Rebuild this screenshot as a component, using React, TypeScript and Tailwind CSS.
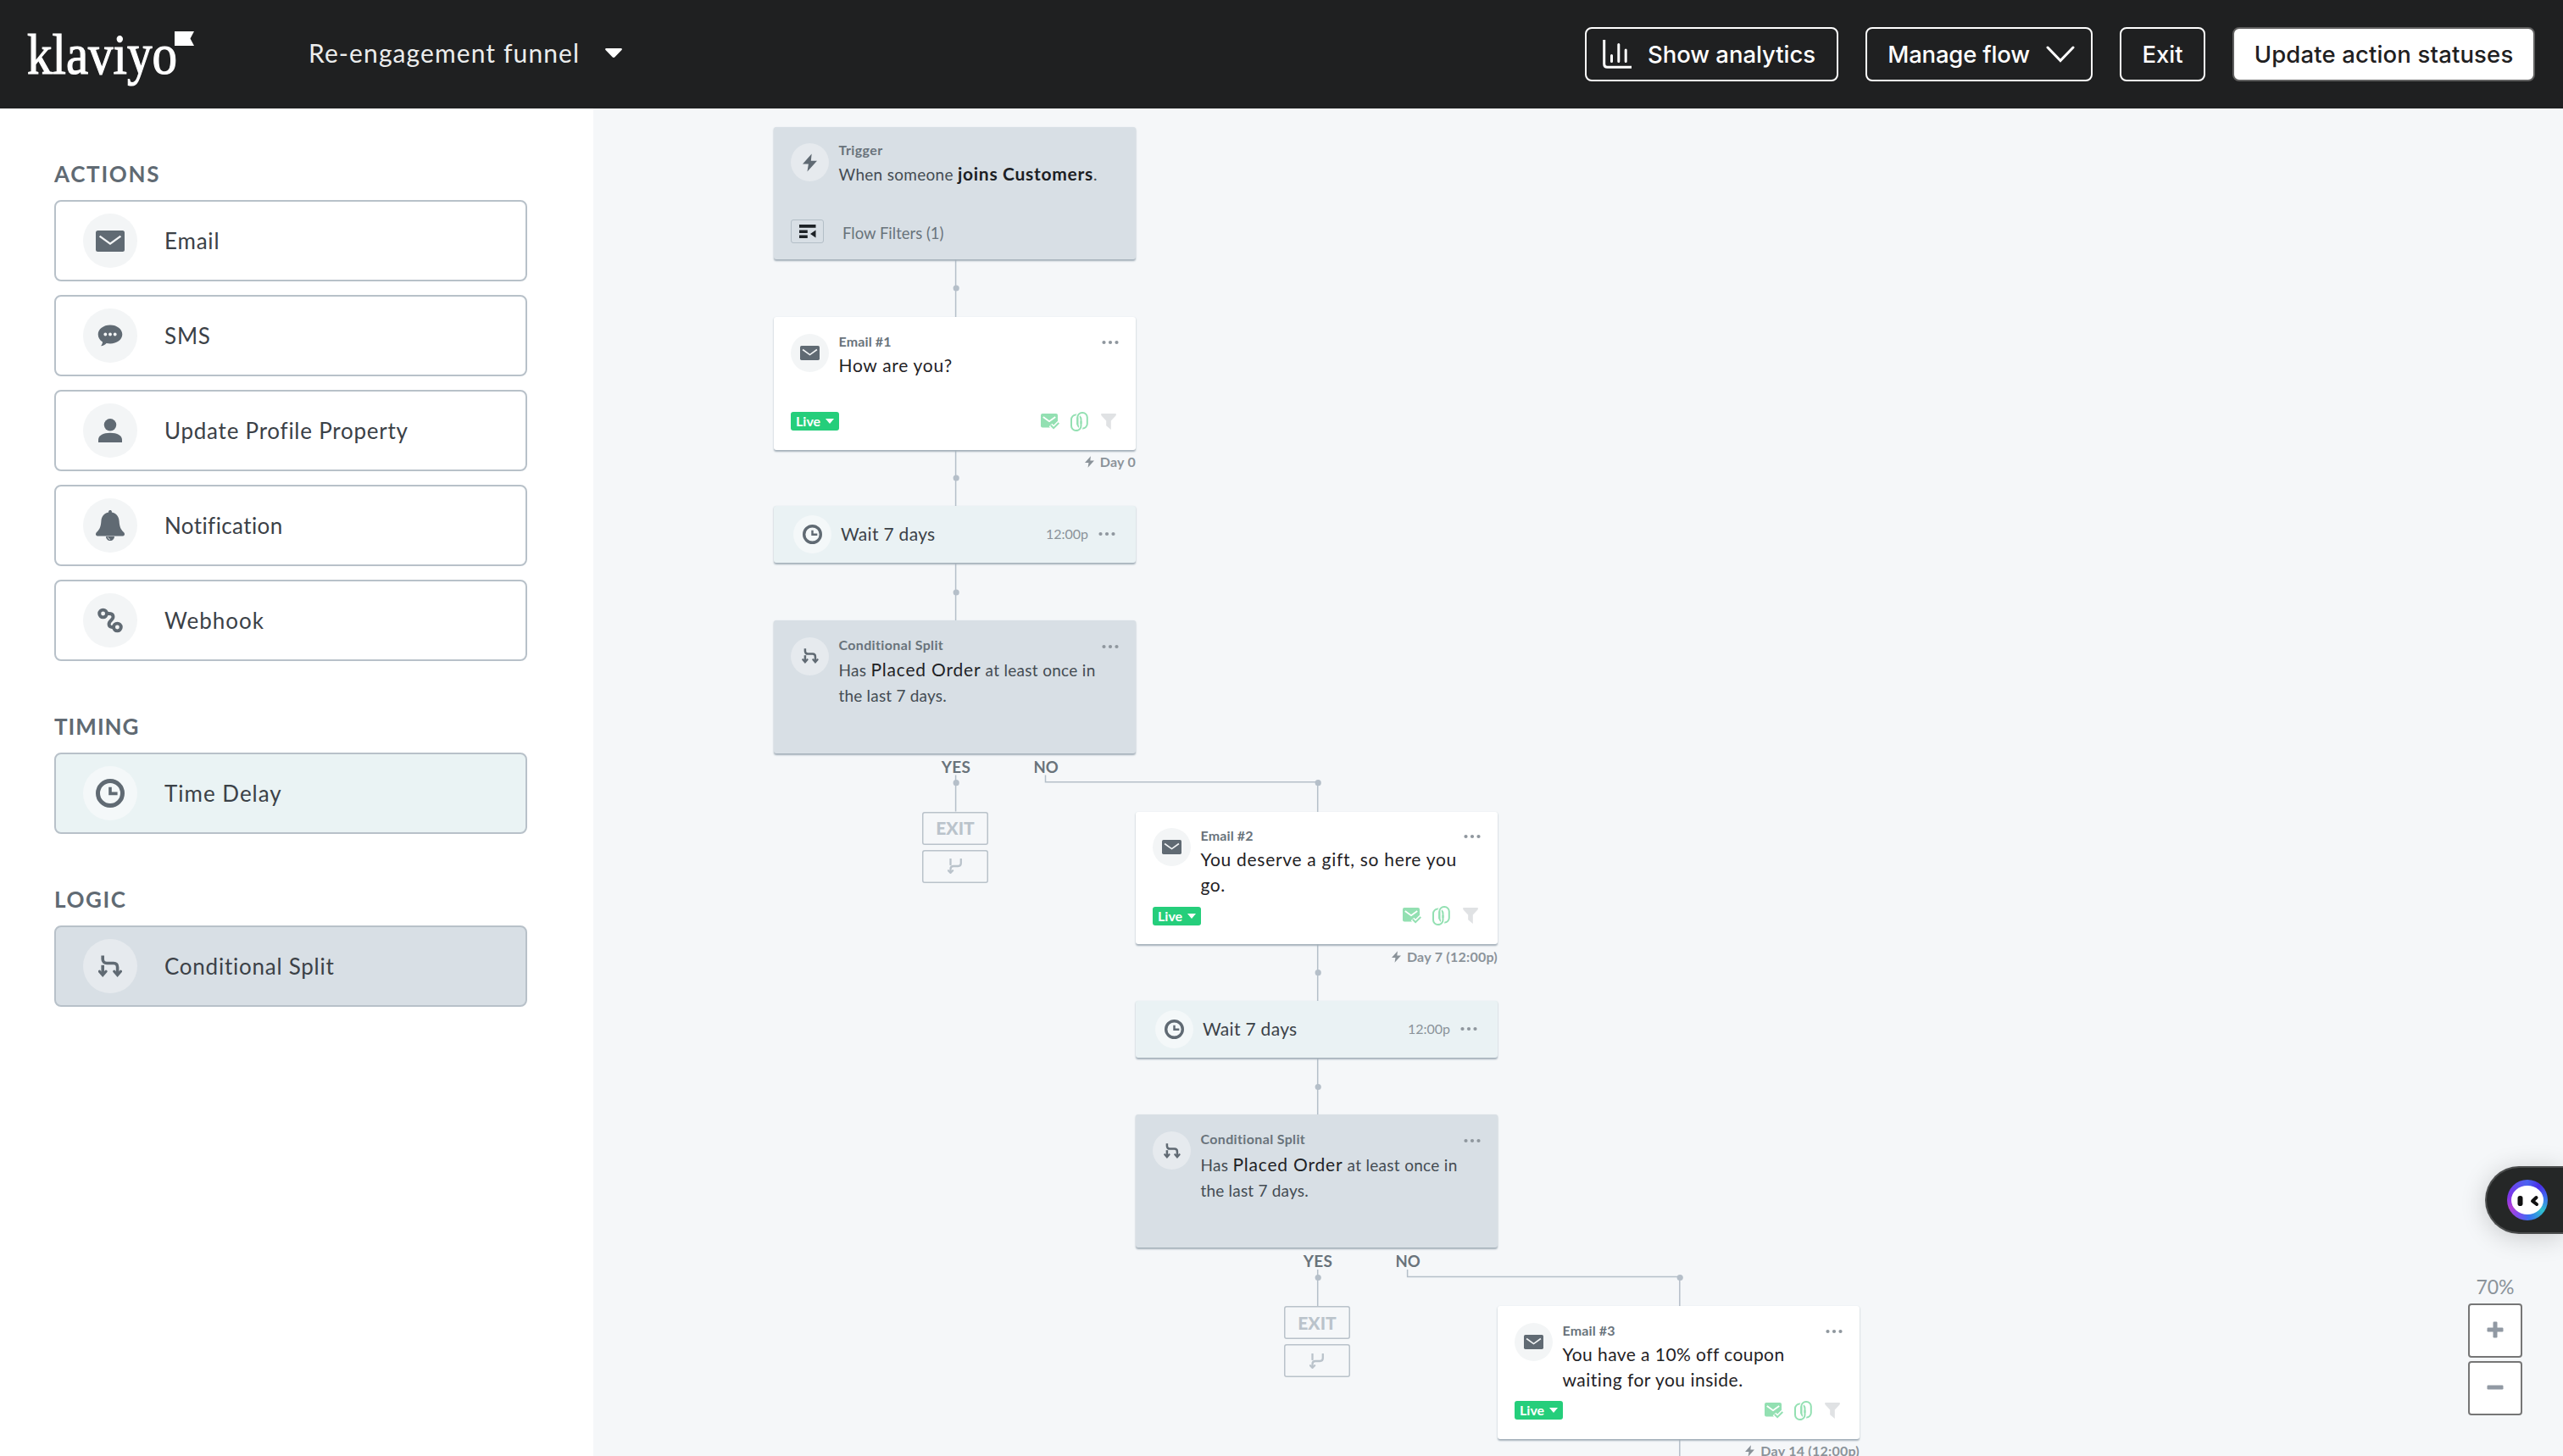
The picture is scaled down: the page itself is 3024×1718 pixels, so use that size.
import type { ReactNode } from "react";

type IconProps = { className?: string };

function MailIcon({ className }: IconProps) {
  return (
    <svg viewBox="0 0 34 25" className={className}>
      <rect width="34" height="25" rx="2.5" fill="currentColor" />
      <path d="M4.6 6.6 17 15.6 29.4 6.6" fill="none" stroke="#f3f5f6" strokeWidth="2.4" />
    </svg>
  );
}

function ChatIcon({ className }: IconProps) {
  return (
    <svg viewBox="0 0 30 26" className={className}>
      <path
        d="M15 .5C23 .5 29.3 5.4 29.3 11.600S23 22.500 15 22.500c-1.600 0-3-.2-4.400-.5C9 23.800 6.600 25 4 25.300c1.200-1.300 2-3 2-4.800C2.600 18.500.7 15.300.7 11.600.7 5.400 7 .5 15 .5Z"
        fill="currentColor"
      />
      <circle cx="9.300" cy="11.500" r="1.900" fill="#f3f5f6" />
      <circle cx="15" cy="11.500" r="1.900" fill="#f3f5f6" />
      <circle cx="20.700" cy="11.500" r="1.900" fill="#f3f5f6" />
    </svg>
  );
}

function PersonIcon({ className }: IconProps) {
  return (
    <svg viewBox="0 0 28 28" className={className} fill="currentColor">
      <circle cx="14" cy="7.300" r="7.200" />
      <path d="M0 28v-3c0-5 5.500-8.200 14-8.200S28 20 28 25v3Z" />
    </svg>
  );
}

function BellIcon({ className }: IconProps) {
  return (
    <svg viewBox="0 0 34 36" className={className} fill="currentColor">
      <path d="M17 0c1.100 0 1.900.7 1.900 1.700v.8c5.200 1 8.400 4.800 8.700 10.300.4 6.500 1.600 9.700 5.400 13.200 1.700 1.600 1.200 4.500-1 4.500H2c-2.200 0-2.700-2.900-1-4.500 3.800-3.500 5-6.700 5.400-13.200.3-5.500 3.500-9.300 8.700-10.300v-.8C15.100.7 15.900 0 17 0Z" />
      <path d="M12 31h10c0 2.900-2.200 5-5 5s-5-2.100-5-5Z" />
      <path d="M14.300 31.800c.3 1.500 1.200 2.400 2.600 2.600" fill="none" stroke="#f3f5f6" strokeWidth="0.900" />
    </svg>
  );
}

function WebhookIcon({ className }: IconProps) {
  return (
    <svg viewBox="0 0 30 30" className={className} fill="none" stroke="currentColor" strokeWidth="3.900">
      <circle cx="6.600" cy="7" r="4.400" />
      <circle cx="23.400" cy="23" r="4.400" />
      <path d="M10.800 7h2.700c6 0 6 4.600 3 7.500-4.500 4-4 8.700 2.400 8.700" />
    </svg>
  );
}

function ClockIcon({ className }: IconProps) {
  return (
    <svg viewBox="0 0 34 34" className={className} fill="none" stroke="currentColor">
      <circle cx="17" cy="17" r="14.500" strokeWidth="5" />
      <path d="M17 9.800v7.600h8.600" strokeWidth="3.600" />
    </svg>
  );
}

function SplitIcon({ className }: IconProps) {
  return (
    <svg viewBox="0 0 28 26" className={className} fill="none" stroke="currentColor">
      <path d="M5.200.5v4.300c0 3 2 4.700 4.800 4.700h8c3.200 0 4.600 1.800 4.600 4.800V21" strokeWidth="3.600" />
      <path d="M5.200 11.800V21" strokeWidth="3.600" />
      <path d="m1.400 19.200 3.800 4.300L9 19.200M18.800 19.200l3.800 4.300 3.800-4.300" strokeWidth="3.200" strokeLinecap="round" />
    </svg>
  );
}

function MergeIcon({ className }: IconProps) {
  return (
    <svg viewBox="0 0 18 18" className={className} fill="none" stroke="currentColor" strokeWidth="2.300">
      <path d="M3.500.8v6.400" strokeLinecap="round" />
      <path d="M15.800.8v4.800c0 2.200-1.200 3.400-3.400 3.400H7c-2.200 0-3.500 1.200-3.500 3.400v4" strokeLinecap="round" />
      <path d="m.9 14.200 2.600 2.600 2.600-2.600" strokeLinecap="round" />
    </svg>
  );
}

function BoltIcon({ className }: IconProps) {
  return (
    <svg viewBox="0 0 18 22" className={className} fill="currentColor">
      <path d="M11.300 0 0 12.700h7.300L5.800 22 18 8.700h-7.600Z" />
    </svg>
  );
}

function FilterListIcon() {
  return (
    <svg viewBox="0 0 20 16" className="h-4 w-5" fill="#1d2226">
      <path d="M0 0h19.500v3.700H0ZM0 6.400h9.800V10H0ZM0 12.400h9.800V16H0ZM19.500 6.400v9L13 10.900Z" />
    </svg>
  );
}

function SmartSendIcon() {
  return (
    <svg viewBox="0 0 22 19" className="h-[19px] w-[22px]">
      <rect width="20" height="16.500" rx="2" fill="#93e0b2" />
      <path d="m2.800 4 7.200 5.200L17.200 4" fill="none" stroke="#fff" strokeWidth="1.800" />
      <path d="m11.500 13.600 3.500 3.600 6.500-6.500" fill="none" stroke="#fff" strokeWidth="5" />
      <path d="m11.800 13.800 3.300 3.400 6.200-6.200" fill="none" stroke="#93e0b2" strokeWidth="2" />
    </svg>
  );
}

function LinkIcon() {
  return (
    <svg viewBox="0 0 21 23" className="h-[23px] w-[21px]" fill="none" stroke="#93e0b2" strokeWidth="2">
      <rect x="1" y="3.500" width="11.500" height="18.500" rx="5.500" />
      <path d="M8.300 8V7a5.700 5.700 0 0 1 5.700-6" stroke="#fff" strokeWidth="4.400" />
      <rect x="8.300" y="1" width="11.500" height="18.500" rx="5.500" />
      <path d="M12.500 14v2.500a5.500 5.500 0 0 1-4 5.300" stroke="#fff" strokeWidth="4.400" />
      <path d="M12.500 11v5.500A5.500 5.500 0 0 1 7 22" />
      <path d="M8.300 6.500V15" />
    </svg>
  );
}

function FunnelIcon() {
  return (
    <svg viewBox="0 0 18 19" className="h-[19px] w-[18px]" fill="#e0e2e4">
      <path d="M.5 0h17c.6.900.5 2-.3 2.800L11.800 8.600V19L6.200 14.200V8.600L.8 2.800C0 2 0 .9.500 0Z" />
    </svg>
  );
}

function Dots({ className }: IconProps) {
  return (
    <svg viewBox="0 0 20 6" className={`h-[6px] w-5 ${className ?? ""}`} fill="#8f979e">
      <circle cx="2.500" cy="3" r="2.100" />
      <circle cx="10" cy="3" r="2.100" />
      <circle cx="17.500" cy="3" r="2.100" />
    </svg>
  );
}

function Logo() {
  return (
    <div className="flex w-[200px] items-start">
      <span className="w-[176px] origin-left scale-x-[0.868] font-['Liberation_Serif'] text-[68px] leading-[74px] whitespace-nowrap text-white [-webkit-text-stroke:1.2px_white]">
        klaviyo
      </span>
      <svg viewBox="0 0 23 17" className="mt-[10px] -ml-[2px] h-[17px] w-[23px] shrink-0" fill="#fff">
        <path d="M0 0h23l-4.500 8.500L23 17H0Z" />
      </svg>
    </div>
  );
}

function Header() {
  return (
    <header className="flex h-32 shrink-0 items-center bg-[#1f2021] pr-[33px] pl-[32px] text-white">
      <Logo />
      <div className="-mt-[3px] ml-[132px] flex items-center text-[30px] tracking-[1.100px] text-[#eceded]">
        <span className="w-[322px] whitespace-nowrap">Re-engagement funnel</span>
        <svg viewBox="0 0 20 11" className="ml-[28px] h-[11px] w-5" fill="#fff">
          <path d="M1.500 0h17c1.300 0 1.800 1.100 1 2l-8 8.300c-.8.900-2.200.900-3 0L.5 2C-.3 1.100.2 0 1.500 0Z" />
        </svg>
      </div>
      <div className="ml-auto flex gap-8 font-[Inter] text-[27.500px] font-medium whitespace-nowrap">
        <button className="flex h-16 w-[299px] items-center rounded-lg border-2 border-white pl-[19px]">
          <svg viewBox="0 0 34 34" className="h-[34px] w-[34px]" fill="none" stroke="#fff" strokeWidth="3">
            <path d="M1.700 0v28.500c0 2.500 1 3.800 3.600 3.800H34" />
            <path d="M10.500 18.500v7M18.800 5.500v20M27.200 12v13.500" strokeLinecap="round" />
          </svg>
          <span className="mt-px ml-[19px] tracking-[-0.050px]">Show analytics</span>
        </button>
        <button className="flex h-16 w-[268px] items-center rounded-lg border-2 border-white pl-[24px]">
          <span className="mt-px w-[168px] tracking-[-0.200px]">Manage flow</span>
          <svg viewBox="0 0 34 20" className="ml-[19px] h-5 w-[34px]" fill="none" stroke="#fff" strokeWidth="3" strokeLinecap="round">
            <path d="M2 2l15 15.500L32 2" />
          </svg>
        </button>
        <button className="h-16 w-[101px] rounded-lg border-2 border-white pt-px">Exit</button>
        <button className="h-16 w-[357px] rounded-lg border-2 border-[#606060] bg-white pt-px text-[#1f2021]">
          <span className="tracking-[0.150px]">Update action statuses</span>
        </button>
      </div>
    </header>
  );
}

function PaletteItem({
  icon,
  label,
  box,
  disc,
  tracking = "tracking-[0.800px]",
}: {
  icon: ReactNode;
  label: string;
  box: string;
  disc: string;
  tracking?: string;
}) {
  return (
    <div className={`flex h-24 w-[558px] items-center rounded-lg border-2 border-[#b8c1c9] pl-8 ${box}`}>
      <span className={`flex size-16 items-center justify-center rounded-full text-[#606a73] ${disc}`}>{icon}</span>
      <span className={`ml-8 text-[26px] whitespace-nowrap text-[#3b4147] ${tracking}`}>{label}</span>
    </div>
  );
}

function PaletteSection({ title, tracking, children }: { title: string; tracking: string; children: ReactNode }) {
  return (
    <section className="pt-[57px]">
      <h2 className={`mb-[11px] text-[26px] leading-10 font-bold text-[#606a73] ${tracking}`}>{title}</h2>
      <div className="flex flex-col gap-4">{children}</div>
    </section>
  );
}

function Sidebar() {
  return (
    <aside className="w-[700px] shrink-0 bg-white pl-16">
      <PaletteSection title="ACTIONS" tracking="tracking-[1.700px]">
        <PaletteItem label="Email" box="bg-white" disc="bg-[#f3f5f6]" icon={<MailIcon className="h-[25px] w-[34px]" />} />
        <PaletteItem label="SMS" box="bg-white" disc="bg-[#f3f5f6]" icon={<ChatIcon className="h-[26px] w-[30px]" />} />
        <PaletteItem label="Update Profile Property" tracking="tracking-[0.750px]" box="bg-white" disc="bg-[#f3f5f6]" icon={<PersonIcon className="size-7" />} />
        <PaletteItem label="Notification" tracking="tracking-[0.400px]" box="bg-white" disc="bg-[#f3f5f6]" icon={<BellIcon className="h-9 w-[34px]" />} />
        <PaletteItem label="Webhook" tracking="tracking-[1.000px]" box="bg-white" disc="bg-[#f3f5f6]" icon={<WebhookIcon className="size-[30px]" />} />
      </PaletteSection>
      <PaletteSection title="TIMING" tracking="tracking-[1.000px]">
        <PaletteItem label="Time Delay" tracking="tracking-[1.000px]" box="bg-[#eaf3f4]" disc="bg-[#f4f8f9]" icon={<ClockIcon className="size-[34px]" />} />
      </PaletteSection>
      <PaletteSection title="LOGIC" tracking="tracking-[1.600px]">
        <PaletteItem label="Conditional Split" tracking="tracking-[0.750px]" box="bg-[#d8dfe5]" disc="bg-[#e6eaee]" icon={<SplitIcon className="h-[26px] w-7" />} />
      </PaletteSection>
    </aside>
  );
}

const cardShadow = "shadow-[0_1.5px_2px_#a3afb9]";

function TriggerCard() {
  return (
    <div className={`absolute top-[22px] left-[213px] h-[156px] w-[427px] rounded-[3px] bg-[#d8dfe5] pt-[19px] pl-5 ${cardShadow}`}>
      <div className="flex">
        <span className="flex size-[45px] items-center justify-center rounded-full bg-[#e6eaee] text-[#606a73]">
          <BoltIcon className="h-[22px] w-[17px]" />
        </span>
        <div className="ml-[11.500px] whitespace-nowrap">
          <div className="-mt-[2px] text-[16px] leading-5 font-bold tracking-[0.400px] text-[#69737b]">Trigger</div>
          <div className="mt-[3px] text-[19px] leading-[30px] tracking-[0.300px] text-[#444c53]">
            When someone <b className="text-[21px] tracking-[0.700px] text-[#1c2024]">joins Customers</b>.
          </div>
        </div>
      </div>
      <div className="mt-[37px] flex items-center">
        <span className="flex h-7 w-[39px] items-center justify-center rounded-[3px] border border-[#b3bec7]">
          <FilterListIcon />
        </span>
        <span className="mt-[5px] ml-[22px] text-[18.500px] leading-6 text-[#69737b]">Flow Filters (1)</span>
      </div>
    </div>
  );
}

function EmailCard({ n, lines }: { n: number; lines: { text: string; tracking: string }[] }) {
  return (
    <div className={`flex h-[156.500px] flex-col rounded-[3px] bg-white pt-[19.500px] pl-5 ${cardShadow}`}>
      <div className="flex h-[92px]">
        <span className="flex size-[45px] items-center justify-center rounded-full bg-[#f3f5f6] text-[#606a73]">
          <MailIcon className="h-[17px] w-[23px]" />
        </span>
        <div className="ml-[11.500px] w-[310px] whitespace-nowrap">
          <div className="-mt-px text-[16px] leading-5 font-bold tracking-[0.150px] text-[#69737b]">Email #{n}</div>
          <div className="mt-[3px] text-[21px] leading-[30px] text-[#1f2225]">
            {lines.map((line) => (
              <div key={line.text} className={line.tracking}>
                {line.text}
              </div>
            ))}
          </div>
        </div>
        <Dots className="mt-[7px]" />
      </div>
      <div className="flex h-[23px] items-center">
        <span className="flex h-[22px] w-[57px] items-center rounded-[3px] bg-[#25ce7b] pl-[6px] text-[16px] leading-none font-bold text-white">
          Live
          <svg viewBox="0 0 10 6" className="ml-[6px] h-[6px] w-[10px]" fill="#fff">
            <path d="M0 0h10L5 6Z" />
          </svg>
        </span>
        <div className="ml-auto flex items-center pr-[23px]">
          <SmartSendIcon />
          <span className="mr-[15px] ml-[13px]">
            <LinkIcon />
          </span>
          <FunnelIcon />
        </div>
      </div>
    </div>
  );
}

function DayLabel({ label }: { label: string }) {
  return (
    <div className="flex h-[66.500px] items-start justify-end text-[16px] font-bold tracking-[0.250px] whitespace-nowrap text-[#8b939a]">
      <span className="mt-[2.500px] flex h-6 items-center gap-[7px]">
        <BoltIcon className="h-[14px] w-[11px]" />
        {label}
      </span>
    </div>
  );
}

function WaitCard() {
  return (
    <div className={`flex h-[67px] items-center rounded-[3px] bg-[#eaf2f4] pr-6 pl-[23px] ${cardShadow}`}>
      <span className="flex size-[45px] items-center justify-center rounded-full bg-[#f4f8f9] text-[#606a73]">
        <ClockIcon className="size-[23px]" />
      </span>
      <span className="-mt-px ml-[11px] text-[21px] tracking-[0.300px] text-[#3b4147]">Wait 7 days</span>
      <span className="-mt-px ml-auto text-[16px] text-[#8b939a]">12:00p</span>
      <Dots className="-mt-px ml-[12px]" />
    </div>
  );
}

function SplitCard() {
  return (
    <div className={`flex h-[157px] rounded-[3px] bg-[#d8dfe5] pt-5 pl-5 ${cardShadow}`}>
      <span className="flex size-[45px] items-center justify-center rounded-full bg-[#e6eaee] text-[#606a73]">
        <SplitIcon className="h-[18px] w-5" />
      </span>
      <div className="ml-[11.500px] w-[310px] whitespace-nowrap">
        <div className="-mt-px text-[16px] leading-5 font-bold tracking-[0.350px] text-[#69737b]">Conditional Split</div>
        <div className="mt-[4.500px] text-[19px] leading-[30px] tracking-[0.300px] text-[#444c53]">
          <div>
            Has <span className="text-[21px] tracking-[0.800px] text-[#1f2225]">Placed Order</span> at least once in
          </div>
          <div className="tracking-[0.200px]">the last 7 days.</div>
        </div>
      </div>
      <Dots className="mt-[8px]" />
    </div>
  );
}

function Branches() {
  return (
    <div className="text-[#69737b]">
      <div className="flex pt-[4px] text-[19px] leading-6 font-bold">
        <span className="ml-[185px] w-[60px] text-center tracking-[0.300px]">YES</span>
        <span className="ml-[46px] w-[60px] text-center text-[18.500px]">NO</span>
      </div>
      <div className="mt-[41px] ml-[175px] flex w-[78px] flex-col gap-[6px] text-[#bac3cb]">
        <span className="flex h-[39px] items-center justify-center rounded-[3px] text-[21px] font-black shadow-[inset_0_0_0_1.5px_#b9c2ca]">
          EXIT
        </span>
        <span className="flex h-[39px] items-center justify-center rounded-[3px] shadow-[inset_0_0_0_1.5px_#b9c2ca]">
          <MergeIcon className="size-[18px]" />
        </span>
      </div>
    </div>
  );
}

const stages = [
  {
    n: 1,
    place: "left-[213px] top-[246px]",
    lines: [{ text: "How are you?", tracking: "tracking-[0.700px]" }],
    day: "Day 0",
  },
  {
    n: 2,
    place: "left-[640px] top-[829.500px]",
    lines: [
      { text: "You deserve a gift, so here you", tracking: "tracking-[0.700px]" },
      { text: "go.", tracking: "tracking-[0.600px]" },
    ],
    day: "Day 7 (12:00p)",
  },
  {
    n: 3,
    place: "left-[1067px] top-[1413px]",
    lines: [
      { text: "You have a 10% off coupon", tracking: "tracking-[0.430px]" },
      { text: "waiting for you inside.", tracking: "tracking-[0.500px]" },
    ],
    day: "Day 14 (12:00p)",
  },
];

function Connectors() {
  return (
    <svg className="absolute inset-0 h-full w-full" fill="none" stroke="#b5bfc9" strokeWidth="1.500">
      <path d="M427.600 178V246M427.600 402V470M427.600 537V604M427.600 786.500V829.500M533.500 786.500V794.800H854.700V830" />
      <path d="M854.700 986V1054M854.700 1121V1188M854.700 1370V1413.500M960.600 1370V1378.500H1281.800V1414M1281.800 1569V1590" />
      <g fill="#b5bfc9" stroke="none">
        <circle cx="428.200" cy="212" r="3.600" />
        <circle cx="428.200" cy="436" r="3.600" />
        <circle cx="428.200" cy="571" r="3.600" />
        <circle cx="428.200" cy="795.700" r="3.600" />
        <circle cx="855.200" cy="795.700" r="3.600" />
        <circle cx="855.200" cy="1019.700" r="3.600" />
        <circle cx="855.200" cy="1154.500" r="3.600" />
        <circle cx="855.200" cy="1379.500" r="3.600" />
        <circle cx="1282.200" cy="1379.500" r="3.600" />
      </g>
    </svg>
  );
}

function AssistantTab() {
  return (
    <div className="absolute top-[1248px] right-0 flex h-20 w-[92px] items-center rounded-l-full border-2 border-r-0 border-[#4b4d4d] bg-[#252727] pl-6 shadow-[0_4px_30px_rgba(0,0,0,0.18)]">
      <span className="flex size-12 items-center justify-center rounded-full bg-[conic-gradient(#4a63f0,#4b2be8_40deg,#3f6cf0_80deg,#2fc0cf_125deg,#3a6ff0_175deg,#7a4df0_210deg,#b23fd6_245deg,#7a35ea_285deg,#4a63f0)]">
        <svg viewBox="0 0 38 34" className="h-[34px] w-[38px]">
          <ellipse cx="19" cy="17" rx="19" ry="17" fill="#fff" />
          <rect x="7.500" y="12" width="6" height="12" rx="2.800" fill="#111" />
          <path d="M29.500 14 25 18.200l5 3.800" fill="none" stroke="#111" strokeWidth="4" strokeLinecap="round" strokeLinejoin="round" />
        </svg>
      </span>
    </div>
  );
}

function ZoomControls() {
  return (
    <div className="absolute top-[1376px] right-12 flex w-16 flex-col gap-1">
      <span className="-mb-1 h-[34px] text-center text-[23px] leading-[29px] text-[#8b939a]">70%</span>
      <button className="flex size-16 items-center justify-center rounded border-2 border-[#767676] bg-white">
        <svg viewBox="0 0 20 20" className="-mt-[3px] size-5" fill="#9199a3">
          <rect x="0.500" y="7.500" width="19" height="5" rx="1.200" />
          <rect x="7.500" y="0.500" width="5" height="19" rx="1.200" />
        </svg>
      </button>
      <button className="flex size-16 items-center justify-center rounded border-2 border-[#767676] bg-white">
        <svg viewBox="0 0 20 20" className="-mt-[3px] size-5" fill="#9199a3">
          <rect x="0.500" y="7.500" width="19" height="5" rx="1.200" />
        </svg>
      </button>
    </div>
  );
}

export default function App() {
  return (
    <div className="flex h-[1718px] w-[3024px] flex-col overflow-hidden font-[Lato,sans-serif]">
      <Header />
      <div className="flex min-h-0 flex-1">
        <Sidebar />
        <main className="relative flex-1 overflow-hidden bg-[#f5f7f9]">
          <Connectors />
          <TriggerCard />
          {stages.map((s) => (
            <div key={s.n} className={`absolute w-[427px] ${s.place}`}>
              <EmailCard n={s.n} lines={s.lines} />
              <DayLabel label={s.day} />
              {s.n < 3 && (
                <>
                  <WaitCard />
                  <div className="h-[67.500px]" />
                  <SplitCard />
                  <Branches />
                </>
              )}
            </div>
          ))}
          <AssistantTab />
          <ZoomControls />
        </main>
      </div>
    </div>
  );
}
